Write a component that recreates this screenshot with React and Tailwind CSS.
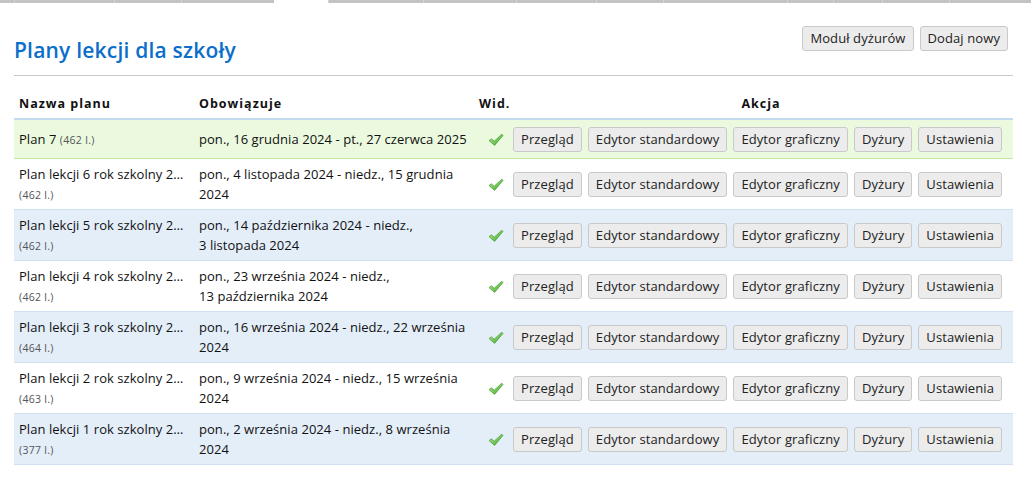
import { useState } from 'react'

// Lesson plan list for a school. Rows are static data here.

const PLANS = [
  { name: 'Plan 7', lessons: 462, range: 'pon., 16 grudnia 2024 - pt., 27 czerwca 2025', tone: 'active' },
  { name: 'Plan lekcji 6 rok szkolny 2024/2025', lessons: 462, range: 'pon., 4 listopada 2024 - niedz., 15 grudnia 2024', tone: 'plain' },
  { name: 'Plan lekcji 5 rok szkolny 2024/2025', lessons: 462, range: ['pon., 14 października 2024 - niedz.,', '3 listopada 2024'], tone: 'alt' },
  { name: 'Plan lekcji 4 rok szkolny 2024/2025', lessons: 462, range: ['pon., 23 września 2024 - niedz.,', '13 października 2024'], tone: 'plain' },
  { name: 'Plan lekcji 3 rok szkolny 2024/2025', lessons: 464, range: 'pon., 16 września 2024 - niedz., 22 września 2024', tone: 'alt' },
  { name: 'Plan lekcji 2 rok szkolny 2024/2025', lessons: 463, range: 'pon., 9 września 2024 - niedz., 15 września 2024', tone: 'plain' },
  { name: 'Plan lekcji 1 rok szkolny 2024/2025', lessons: 377, range: 'pon., 2 września 2024 - niedz., 8 września 2024', tone: 'alt' },
]

const ACTIONS = ['Przegląd', 'Edytor standardowy', 'Edytor graficzny', 'Dyżury', 'Ustawienia']

// top strip of tabs, one of them is the current (white) one
const TABS = [14, 100, 67, 93, 54, 95, 93, 80, 67, 124, 46, 49, 67, 82]

const ROW_TONE = {
  active: 'bg-[#ebfadf] border-b border-[#c6e6a8]',
  plain: 'bg-white border-b border-[#cfe0f0]',
  alt: 'bg-[#e4eef9] border-b border-[#cfe0f0]',
}

function Check() {
  return (
    <svg width="16" height="14" viewBox="0 0 16 14" className="inline-block">
      <defs>
        <linearGradient id="chk" x1="0" y1="0" x2="1" y2="1">
          <stop offset="0" stopColor="#b6ee98" />
          <stop offset="1" stopColor="#3aa524" />
        </linearGradient>
      </defs>
      <path d="M1 7.6 L3.4 5.8 L6.2 8.2 L13.8 1.2 L15 2.4 L6.6 12.4 Z" fill="url(#chk)" stroke="#4a9a35" strokeWidth="0.7" strokeLinejoin="round" />
    </svg>
  )
}

function Btn({ children }) {
  return (
    <button className="my-[1.5px] h-[25px] rounded-[3px] border border-[#c9c9c9] bg-[#ececec] px-[7px]
      text-[13px] leading-none tracking-[0.1px] text-[#222] hover:bg-[#e2e2e2]">
      {children}
    </button>
  )
}

export default function App() {
  const [tab] = useState(4)
  return (
    <div className="min-h-[482px] bg-white text-[13px] tracking-[0.05px] text-[#111]"
      style={{ fontFamily: '"Open Sans", "Noto Sans", sans-serif' }}>
      <div className="flex h-[3px]">
        {TABS.map((w, i) => (
          <div key={i} style={{ width: w }}
            className={i === tab ? 'bg-white' : 'border-l border-[#d4d4d4] bg-[#c3c3c3] first:border-l-0'} />
        ))}
        <div className="flex-1 bg-[#c3c3c3]" />
      </div>

      <div className="ml-[14px] w-[999px]">
        <div className="flex h-[73px] items-start justify-between border-b border-[#c8c8c8] pt-[21px]">
          <h1 className="mt-[16px] text-[21px] font-semibold leading-none tracking-[0.2px] text-[#0b6ecb]">
            Plany lekcji dla szkoły
          </h1>
          <div className="mr-[5px] flex gap-[6px]">
            <Btn>Moduł dyżurów</Btn>
            <Btn>Dodaj nowy</Btn>
          </div>
        </div>

        <table className="w-[999px] table-fixed border-collapse">
          <colgroup>
            <col className="w-[180px]" />
            <col className="w-[280px]" />
            <col className="w-[35px]" />
            <col />
          </colgroup>
          <thead>
            <tr className="border-b-2 border-[#c4daee] text-left text-[12.5px] font-bold leading-[17px] tracking-[1px]">
              <th className="px-[5px] pb-[6px] pt-[19px] font-bold">Nazwa planu</th>
              <th className="px-[5px] pb-[6px] pt-[19px] font-bold">Obowiązuje</th>
              <th className="px-[5px] pb-[6px] pt-[19px] font-bold">Wid.</th>
              <th className="px-[5px] pb-[6px] pt-[19px] text-center font-bold">Akcja</th>
            </tr>
          </thead>
          <tbody>
            {PLANS.map((p) => (
              <tr key={p.name} className={ROW_TONE[p.tone]}>
                <td className="px-[5px] py-[4.5px] align-middle leading-[20px]">
                  <span className="inline-block h-[20px] max-w-[170px] truncate align-top">{p.name}</span>
                  {' '}
                  <span className="text-[10.5px] tracking-[0.3px] text-[#555]">({p.lessons} l.)</span>
                </td>
                <td className="px-[5px] py-[4.5px] align-middle leading-[20px]">
                  {Array.isArray(p.range)
                    ? p.range.map((line) => <div key={line}>{line}</div>)
                    : p.range}
                </td>
                <td className="py-[4px] pl-[10px] pr-[2px] text-center align-middle"><Check /></td>
                <td className="py-[5px] pl-[4px] align-middle">
                  <div className="flex gap-[6px]">
                    {ACTIONS.map((a) => <Btn key={a}>{a}</Btn>)}
                  </div>
                </td>
              </tr>
            ))}
          </tbody>
        </table>
      </div>
    </div>
  )
}
